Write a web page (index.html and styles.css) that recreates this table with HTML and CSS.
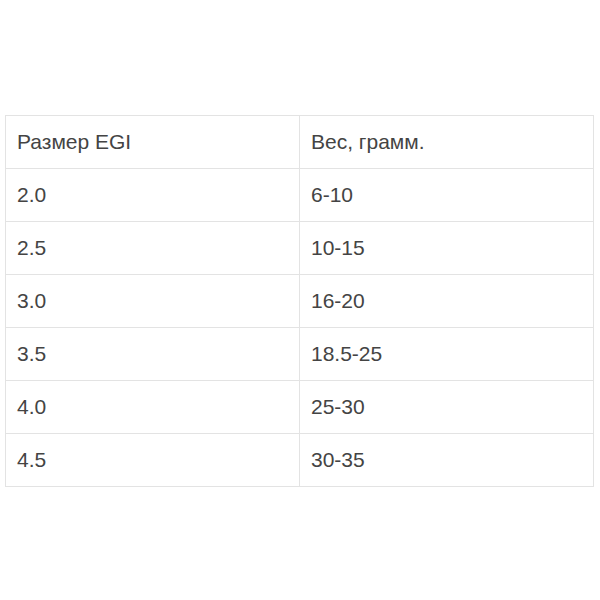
FILE: index.html
```html
<!DOCTYPE html>
<html>
<head>
<meta charset="utf-8">
<link rel="stylesheet" href="styles.css">
</head>
<body>
<div class="wrap">
<table class="sizes">
<tr><td>Размер EGI</td><td>Вес, грамм.</td></tr>
<tr><td>2.0</td><td>6-10</td></tr>
<tr><td>2.5</td><td>10-15</td></tr>
<tr><td>3.0</td><td>16-20</td></tr>
<tr><td>3.5</td><td>18.5-25</td></tr>
<tr><td>4.0</td><td>25-30</td></tr>
<tr><td>4.5</td><td>30-35</td></tr>
</table>
</div>
</body>
</html>
```
FILE: styles.css
```css
html, body {
  margin: 0;
  padding: 0;
  background: #fff;
}
.wrap {
  padding: 115px 0 0 5px;
}
.sizes {
  border-collapse: collapse;
  width: 589px;
  font-family: "Liberation Sans", Arial, sans-serif;
  font-size: 21px;
  color: #444;
}
.sizes td {
  border: 1px solid #e3e3e3;
  height: 52px;
  padding: 0 0 0 11px;
  vertical-align: middle;
  width: 50%;
}
```
